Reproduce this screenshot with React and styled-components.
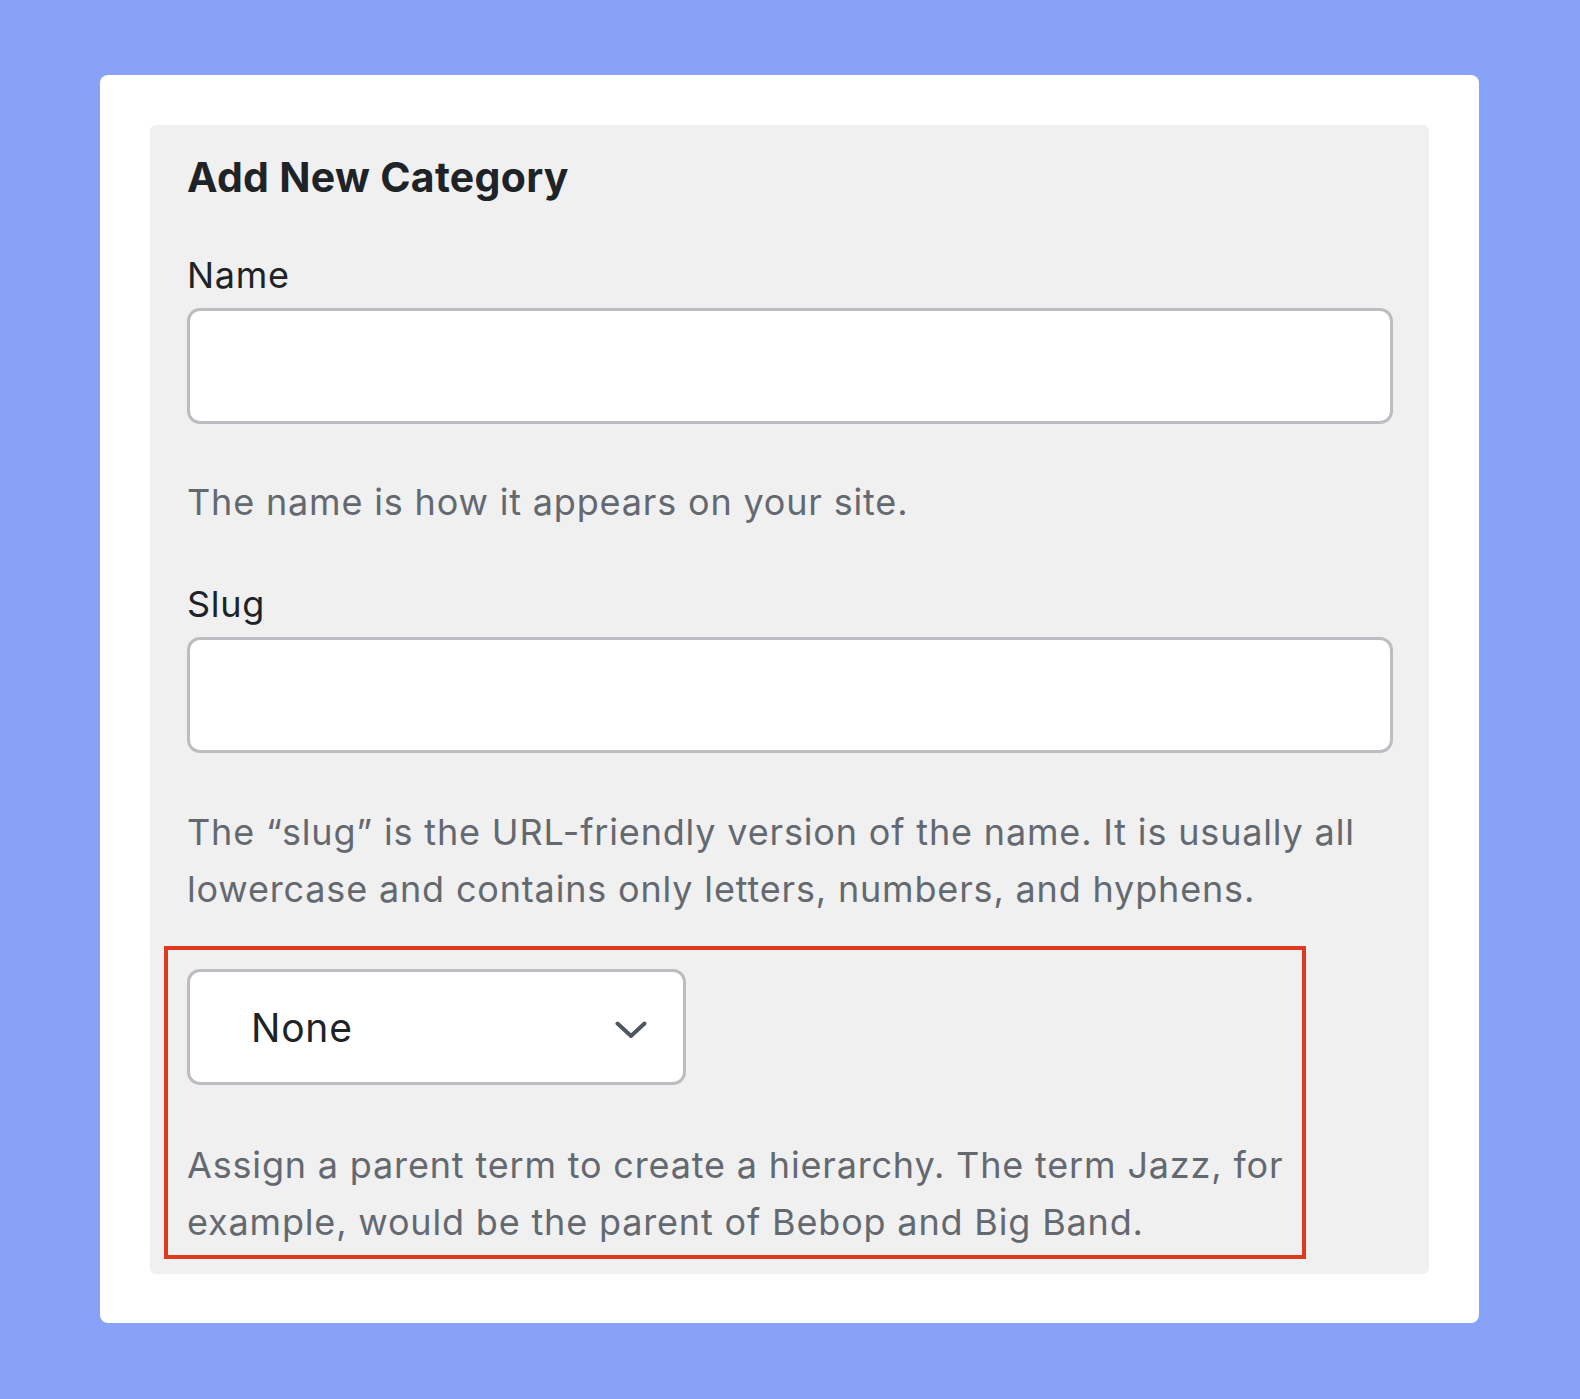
import React from "react";
import styled, { createGlobalStyle } from "styled-components";

const GlobalStyle = createGlobalStyle`
  html, body {
    margin: 0;
    padding: 0;
    background: #87a2f7;
  }
  body {
    font-family: Inter, "Noto Sans", "Liberation Sans", sans-serif;
  }
  * { box-sizing: border-box; }
`;

const Page = styled.div`
  min-height: 1399px;
  padding: 75px 0 0 100px;
`;

const Card = styled.div`
  width: 1379px;
  height: 1248px;
  background: #ffffff;
  border-radius: 8px;
  padding: 50px;
`;

const Panel = styled.form`
  background: #f0f0f1;
  border-radius: 6px;
  padding: 27px 36px 23px 37px;
  display: flex;
  flex-direction: column;
  align-items: flex-start;
`;

const Title = styled.h2`
  margin: 0;
  font-size: 41px;
  line-height: 50px;
  font-weight: 700;
  color: #1d2327;
  letter-spacing: 0.3px;
`;

const Label = styled.label`
  display: block;
  margin-top: ${(p) => p.$gap}px;
  font-size: 36px;
  line-height: 44px;
  color: #1d2327;
  letter-spacing: 0.7px;
`;

const TextInput = styled.input`
  display: block;
  width: 100%;
  height: 116px;
  margin-top: ${(p) => p.$gap}px;
  border: 3px solid #bcbdc1;
  border-radius: 13px;
  background: #ffffff;
  font-family: inherit;
  font-size: 39px;
  padding: 0 24px;
  outline: none;
`;

const Description = styled.p`
  margin: ${(p) => p.$gap}px 0 0;
  font-size: 36px;
  line-height: 57px;
  color: #646970;
  letter-spacing: 0.83px;
`;

const ParentField = styled.div`
  position: relative;
  margin-top: 51px;
  width: 100%;
`;

const Annotation = styled.div`
  position: absolute;
  left: -23px;
  top: -23px;
  width: 1142px;
  height: 313px;
  border: 4px solid #e03a1e;
  pointer-events: none;
`;

const Select = styled.div`
  width: 499px;
  height: 116px;
  border: 3px solid #bcbdc1;
  border-radius: 13px;
  background: #ffffff;
  display: flex;
  align-items: center;
  justify-content: space-between;
  padding: 0 36px 0 61px;
`;

const SelectValue = styled.span`
  font-size: 39px;
  line-height: 39px;
  color: #1d2327;
  letter-spacing: 0.8px;
`;

const Chevron = styled.svg`
  width: 32px;
  height: 18px;
  margin-top: 6px;
  display: block;
`;

export default function App() {
  return (
    <>
      <GlobalStyle />
      <Page>
        <Card>
          <Panel onSubmit={(e) => e.preventDefault()}>
            <Title>Add New Category</Title>

            <Label $gap={51} htmlFor="tag-name">Name</Label>
            <TextInput $gap={11} id="tag-name" type="text" />
            <Description $gap={50}>The name is how it appears on your site.</Description>

            <Label $gap={51} htmlFor="tag-slug">Slug</Label>
            <TextInput $gap={11} id="tag-slug" type="text" />
            <Description $gap={51}>
              The “slug” is the URL-friendly version of the name. It is usually all lowercase and contains only letters, numbers, and hyphens.
            </Description>

            <ParentField>
              <Select>
                <SelectValue>None</SelectValue>
                <Chevron viewBox="0 0 32 18" fill="none">
                  <polyline
                    points="2.5,2.5 16,15 29.5,2.5"
                    stroke="#50575e"
                    strokeWidth="4"
                    strokeLinecap="round"
                    strokeLinejoin="round"
                  />
                </Chevron>
              </Select>
              <Description $gap={52}>
                Assign a parent term to create a hierarchy. The term Jazz, for example, would be the parent of Bebop and Big Band.
              </Description>
              <Annotation />
            </ParentField>
          </Panel>
        </Card>
      </Page>
    </>
  );
}
